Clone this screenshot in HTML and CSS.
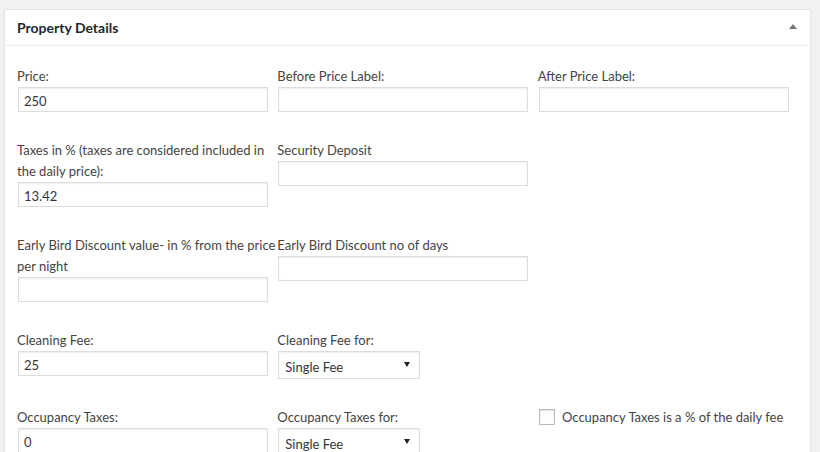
FILE: index.html
```html
<!DOCTYPE html>
<html>
<head>
<meta charset="utf-8">
<title>Property Details</title>
<link rel="stylesheet" href="styles.css">
</head>
<body>
<div class="postbox">
  <div class="hndle">
    <h2 class="hndle-title">Property Details</h2>
    <span class="toggle"></span>
  </div>
  <div class="inside">
    <div class="row">
      <div class="col"><label class="lbl">Price:</label><input class="txt" type="text" value="250"></div>
      <div class="col"><label class="lbl">Before Price Label:</label><input class="txt" type="text" value=""></div>
      <div class="col"><label class="lbl">After Price Label:</label><input class="txt" type="text" value=""></div>
    </div>
    <div class="row">
      <div class="col"><label class="lbl">Taxes in % (taxes are considered included in the daily price):</label><input class="txt" type="text" value="13.42"></div>
      <div class="col"><label class="lbl">Security Deposit</label><input class="txt" type="text" value=""></div>
      <div class="col"></div>
    </div>
    <div class="row">
      <div class="col"><label class="lbl">Early Bird Discount value- in % from the price per night</label><input class="txt" type="text" value=""></div>
      <div class="col"><label class="lbl">Early Bird Discount no of days</label><input class="txt" type="text" value=""></div>
      <div class="col"></div>
    </div>
    <div class="row">
      <div class="col"><label class="lbl">Cleaning Fee:</label><input class="txt" type="text" value="25"></div>
      <div class="col"><label class="lbl">Cleaning Fee for:</label><div class="sel"><select class="sel-box"><option>Single Fee</option></select></div></div>
      <div class="col"></div>
    </div>
    <div class="row">
      <div class="col"><label class="lbl">Occupancy Taxes:</label><input class="txt" type="text" value="0"></div>
      <div class="col"><label class="lbl">Occupancy Taxes for:</label><div class="sel"><select class="sel-box"><option>Single Fee</option></select></div></div>
      <div class="col"><label class="chk-lbl"><input class="chk" type="checkbox"> Occupancy Taxes is a % of the daily fee</label></div>
    </div>
  </div>
</div>
</body>
</html>
```
FILE: styles.css
```css
html, body {
  margin: 0;
  padding: 0;
  overflow: hidden;
}
body {
  background: #f1f1f1;
  font-family: "Lato", sans-serif;
  font-size: 13px;
  color: #444;
}
.postbox {
  margin: 9px 9px 0 4px;
  background: #fff;
  border: 1px solid #e5e5e5;
  box-shadow: 0 1px 1px rgba(0,0,0,.04);
}
.hndle {
  display: flex;
  align-items: center;
  justify-content: space-between;
  border-bottom: 1px solid #eee;
  padding: 8px 12px;
}
.hndle-title {
  margin: 0;
  font-size: 14px;
  font-weight: 700;
  line-height: 19px;
  color: #23282d;
}
.toggle {
  width: 0;
  height: 0;
  border-left: 4px solid transparent;
  border-right: 4px solid transparent;
  border-bottom: 5px solid #72777c;
  margin-right: 1px;
  margin-top: -2px;
}
.inside {
  padding: 20px 12px 12px;
}
.row {
  display: grid;
  grid-template-columns: repeat(3, minmax(0, 1fr));
  align-items: start;
  margin-bottom: 28px;
}
.lbl {
  display: block;
  line-height: 21px;
}
.txt {
  display: block;
  box-sizing: border-box;
  width: 96%;
  height: 25px;
  margin: 0 0 0 1px;
  padding: 2px 5px 0;
  border: 1px solid #ddd;
  box-shadow: inset 0 1px 2px rgba(0,0,0,.07);
  background: #fff;
  font-family: "Lato", sans-serif;
  font-size: 13px;
  color: #32373c;
  outline: none;
}
.sel {
  position: relative;
  width: 142px;
  margin-left: 1px;
}
.sel-box {
  display: block;
  box-sizing: border-box;
  width: 142px;
  height: 28px;
  margin: 0;
  padding: 3px 20px 0 6px;
  border: 1px solid #ddd;
  border-radius: 0;
  box-shadow: inset 0 1px 2px rgba(0,0,0,.07);
  background: #fff;
  font-family: "Lato", sans-serif;
  font-size: 13px;
  color: #32373c;
  -webkit-appearance: none;
  appearance: none;
  outline: none;
}
.sel::after {
  content: "";
  position: absolute;
  right: 10px;
  top: 11px;
  width: 0;
  height: 0;
  border-left: 3px solid transparent;
  border-right: 3px solid transparent;
  border-top: 5px solid #222;
}
.chk-lbl {
  display: block;
  line-height: 21px;
}
.chk {
  -webkit-appearance: none;
  appearance: none;
  box-sizing: border-box;
  width: 16px;
  height: 16px;
  margin: 0 4px 0 1px;
  border: 1px solid #b4b9be;
  background: #fff;
  box-shadow: inset 0 1px 2px rgba(0,0,0,.1);
  vertical-align: -3px;
}
```
